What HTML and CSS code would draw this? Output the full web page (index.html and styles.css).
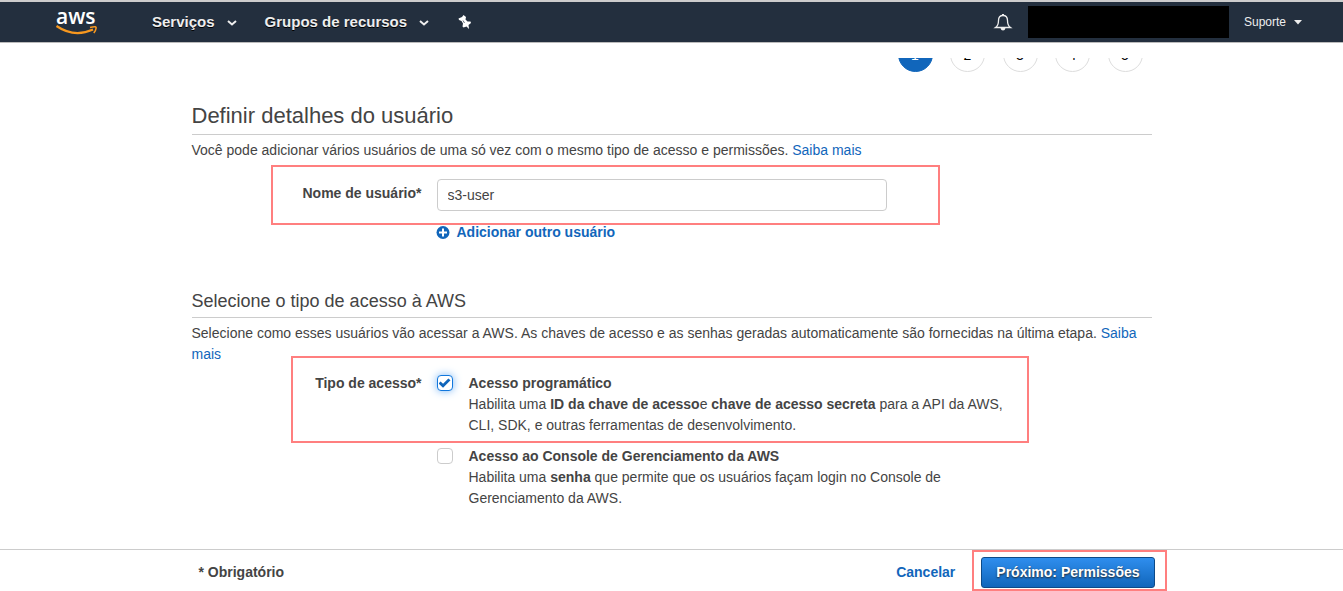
FILE: index.html
```html
<!DOCTYPE html>
<html lang="pt-BR">
<head>
<meta charset="utf-8">
<title>Adicionar usuário</title>
<link rel="stylesheet" href="styles.css">
</head>
<body>
<header class="topbar">
  <nav class="nav">
    <a class="logo" href="#" aria-label="AWS">
      <svg width="42" height="30" viewBox="0 0 42 30">
        <text class="logo-text" x="0" y="17">aws</text>
        <path d="M.5 19Q18 31 37 22.500" fill="none" stroke="#f7981f" stroke-width="2.200"/>
        <path d="M34 20.500Q41 18.500 40 21.500Q39.800 23.500 37.800 26" fill="none" stroke="#f7981f" stroke-width="1.600"/>
      </svg>
    </a>
    <button class="nav-item" type="button">Serviços
      <svg class="caret" width="10" height="7" viewBox="0 0 10 7"><path d="M1 1l4 3.500 4-3.500" fill="none" stroke="#eee" stroke-width="2"/></svg>
    </button>
    <button class="nav-item" type="button">Grupos de recursos
      <svg class="caret" width="10" height="7" viewBox="0 0 10 7"><path d="M1 1l4 3.500 4-3.500" fill="none" stroke="#eee" stroke-width="2"/></svg>
    </button>
    <button class="pin" type="button" aria-label="Fixar">
      <svg width="14" height="16" viewBox="0 0 14 16"><path d="M5.500 1L8 3 7.500 5.500 9.500 7.500 12.500 7.500 13 9 10.500 11 11 15 8.500 12.500 5.500 13.500 4.500 12.500 5 9.500 3.500 7 1 6 .5 4.500 4 3z" fill="#fff"/><path d="M5 6.500l1.500 2.500" stroke="#232f3e" stroke-width=".7"/></svg>
    </button>
  </nav>
  <div class="account">
    <button class="bell" type="button" aria-label="Notificações">
      <svg width="18" height="18" viewBox="0 0 18 18"><path d="M1.500 14.500Q4.500 12.500 4.500 7.500Q4.500 2.500 9 2.500Q13.500 2.500 13.500 7.500Q13.500 12.500 16.500 14.500Z" fill="none" stroke="#eee" stroke-width="1.300"/><path d="M8 1h2v2H8zM6.500 15h5Q11 17.500 9 17.500T6.500 15z" fill="#eee"/></svg>
    </button>
    <div class="redacted"></div>
    <button class="support" type="button">Suporte
      <svg width="8" height="5" viewBox="0 0 8 5"><path d="M0 0h8L4 4.500z" fill="#eee"/></svg>
    </button>
  </div>
</header>

<main class="scroller">
  <div class="content">
    <ol class="steps">
      <li class="step current">1</li><li class="step">2</li><li class="step">3</li><li class="step">4</li><li class="step">5</li>
    </ol>

    <section>
      <h1 class="title">Definir detalhes do usuário</h1>
      <p class="intro">Você pode adicionar vários usuários de uma só vez com o mesmo tipo de acesso e permissões. <a href="#">Saiba mais</a></p>
      <div class="form-row name-row">
        <label class="row-label" for="username">Nome de usuário*</label>
        <input class="text-input" id="username" type="text" value="s3-user">
        <span class="mark mark-name"></span>
      </div>
      <a class="add-user" href="#">
        <svg width="14" height="14" viewBox="0 0 14 14"><circle cx="7" cy="6.500" r="6.500" fill="#1166bb"/><path d="M7 2.500v8M3 6.500h8" stroke="#fff" stroke-width="2"/></svg>
        Adicionar outro usuário</a>
    </section>

    <section class="access">
      <h2 class="subtitle">Selecione o tipo de acesso à AWS</h2>
      <p class="intro">Selecione como esses usuários vão acessar a AWS. As chaves de acesso e as senhas geradas automaticamente são fornecidas na última etapa. <a href="#">Saiba mais</a></p>
      <div class="form-row access-row">
        <div class="row-label">Tipo de acesso*</div>
        <div class="option">
          <input class="check" id="prog" type="checkbox" checked>
          <div><label for="prog">Acesso programático</label>
          <p>Habilita uma <b>ID da chave de acesso</b>e <b>chave de acesso secreta</b> para a API da AWS, CLI, SDK, e outras ferramentas de desenvolvimento.</p></div>
        </div>
        <span class="mark mark-access"></span>
      </div>
      <div class="form-row second-row">
        <div></div>
        <div class="option">
          <input class="check" id="console" type="checkbox">
          <div><label for="console">Acesso ao Console de Gerenciamento da AWS</label>
          <p>Habilita uma <b>senha</b> que permite que os usuários façam login no Console de Gerenciamento da AWS.</p></div>
        </div>
      </div>
    </section>
  </div>
</main>

<footer class="footer">
  <div class="footer-inner">
    <span class="required">* Obrigatório</span>
    <a class="cancel" href="#">Cancelar</a>
    <div class="next-wrap">
      <button class="next" type="button">Próximo: Permissões</button>
      <span class="mark mark-next"></span>
    </div>
  </div>
</footer>
</body>
</html>
```
FILE: styles.css
```css
* { box-sizing: border-box; }
body {
  margin: 0;
  height: 100vh;
  display: flex;
  flex-direction: column;
  background: #fff;
  color: #444;
  font: 14px/21px "Liberation Sans", Arial, sans-serif;
}
h1, h2, p, ol { margin: 0; padding: 0; font-weight: normal; }
a { color: #1166bb; text-decoration: none; }
button { font: inherit; border: 0; padding: 0; background: none; cursor: pointer; }
svg { display: block; flex: none; overflow: visible; }

.topbar {
  flex: none;
  display: flex;
  justify-content: space-between;
  align-items: center;
  height: 43px;
  padding: 0 41px 0 56px;
  background: #232f3e;
  border-top: 2px solid #ccc;
  border-bottom: 1px solid #bbb;
}
.nav, .account { display: flex; align-items: center; }
.logo { margin-right: 54px; }
.logo-text { font: 600 21px "Open Sans", "Noto Sans", sans-serif; fill: #fff; }
.nav-item {
  display: flex;
  align-items: center;
  gap: 12px;
  margin-right: 28px;
  padding-bottom: 1px;
  color: #eee;
  font-size: 15px;
  line-height: 20px;
  font-weight: bold;
  text-shadow: 0 1px 0 #000;
}
.caret { margin-top: 3px; }
.pin { margin-left: 1px; }
.bell { margin-right: 16px; }
.redacted { width: 201px; height: 32px; margin-right: 15px; background: #000; }
.support {
  display: flex;
  align-items: center;
  gap: 8px;
  color: #eee;
  font-size: 12px;
}

.scroller { flex: 1; min-height: 0; margin-top: 15px; overflow: hidden; }
.content { max-width: 960px; margin: 0 auto; }
.steps {
  display: flex;
  justify-content: space-between;
  width: 245px;
  margin: -21px 9px 29px auto;
  list-style: none;
}
.step {
  width: 35px;
  height: 35px;
  border: 1px solid #ddd;
  border-radius: 50%;
  color: #000;
  line-height: 35px;
  text-align: center;
}
.step.current { background: #1166bb; border-color: #1166bb; color: #fff; }

.title {
  padding-bottom: 3px;
  border-bottom: 1px solid #ccc;
  font-size: 22px;
  line-height: 30px;
}
.subtitle {
  padding-bottom: 4px;
  border-bottom: 1px solid #ccc;
  font-size: 18px;
  line-height: 24px;
}
.intro { margin-top: 5px; }
.form-row {
  position: relative;
  display: grid;
  grid-template-columns: 230px 1fr;
  column-gap: 15px;
}
.row-label { font-weight: bold; text-align: right; }
.name-row { margin-top: 18px; }
.name-row .row-label { padding-top: 4px; }
.text-input {
  width: 450px;
  height: 32px;
  padding: 0 10px;
  border: 1px solid #ccc;
  border-radius: 4px;
  background: #fff;
  color: #444;
  font: inherit;
}
.add-user {
  display: flex;
  align-items: center;
  gap: 7px;
  width: max-content;
  margin: 11px 0 0 244px;
  font-weight: bold;
}

.access { margin-top: 46px; }
.access-row { margin-top: 8px; }
.second-row { margin-top: 10px; }
.option { display: flex; gap: 16px; max-width: 580px; }
.option label { font-weight: bold; }
.check {
  appearance: none;
  flex: none;
  display: grid;
  place-items: center;
  width: 16px;
  height: 16px;
  margin: 2px 0 0;
  border: 1px solid #ccc;
  border-radius: 4px;
  background: #fff;
}
.check:checked { border-color: #1177dd; box-shadow: 0 0 8px #77b5f5; }
.check:checked::before {
  content: "";
  width: 12px;
  height: 10px;
  background: #1166bb;
  clip-path: polygon(0 54%, 17% 35%, 38% 57%, 82% 4%, 100% 23%, 38% 98%);
}

.mark { position: absolute; border: 2px solid rgba(255, 0, 0, 0.5); pointer-events: none; }
.mark-name { inset: -14px 212px -14px 79px; }
.mark-access { inset: -17px 123px -7px 99px; }
.mark-next { inset: -7px -12px -3px -9px; }

.footer { flex: none; border-top: 1px solid #ccc; }
.footer-inner {
  display: flex;
  align-items: center;
  max-width: 966px;
  margin: 0 auto;
  padding: 7px 0 3px 10px;
  font-weight: bold;
}
.required { flex: 1; }
.cancel { margin-right: 26px; }
.next-wrap { position: relative; }
.next {
  height: 31px;
  padding: 0 14px;
  border: 1px solid #0d4a88;
  border-radius: 3px;
  background: linear-gradient(#2f8eee, #1166bb);
  color: #fff;
  font-weight: bold;
  text-shadow: 0 1px 2px #222;
}
```
